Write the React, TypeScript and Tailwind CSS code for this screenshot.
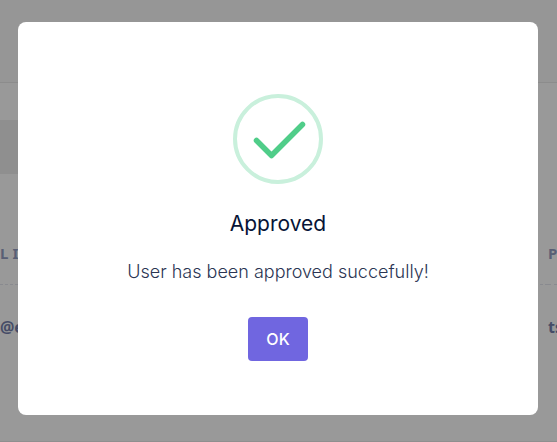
function SuccessIcon() {
  return (
    <svg viewBox="0 0 90 90" className="size-[90px]" fill="none" aria-hidden="true">
      <circle cx="45" cy="45" r="43" stroke="#c9f0dc" strokeWidth="4" />
      <path
        d="M23.5 46.5 38.5 61.5 69.5 30.5"
        stroke="#50cd89"
        strokeWidth="5.5"
        strokeLinecap="round"
        strokeLinejoin="round"
      />
    </svg>
  );
}

function UsersPage() {
  return (
    <div className="flex min-h-screen flex-col border-b border-[#efefef] bg-white font-['Noto_Sans',sans-serif]">
      <header className="h-[83px] border-b border-[#eaeaea] bg-[#fafafa]" />
      <div className="pt-[37px]">
        <div className="h-[54px] w-1/2 bg-[#efefef]" />
      </div>
      <table className="mt-[48px] w-full table-fixed border-collapse text-left">
        <thead>
          <tr className="h-[62px] border-b border-dashed border-[#e4e6ef] text-[15px] font-bold text-[#949fc4]">
            <th className="p-0 tracking-[4px]">LI</th>
            <th className="w-[9px] p-0">P</th>
          </tr>
        </thead>
        <tbody>
          <tr className="h-[86px] text-base font-bold text-[#747fac]">
            <td className="p-0">@e</td>
            <td className="p-0">ts</td>
          </tr>
        </tbody>
      </table>
    </div>
  );
}

export default function App() {
  return (
    <div className="relative h-screen overflow-hidden font-['Inter','Liberation_Sans',sans-serif]">
      <UsersPage />
      <div className="absolute inset-0 flex items-center justify-center bg-black/40 pr-[19px] pb-[5px] pl-[18px]">
        <div
          role="dialog"
          aria-modal="true"
          aria-labelledby="dialog-title"
          aria-describedby="dialog-message"
          className="flex w-full max-w-[520px] flex-col items-center rounded-lg bg-white px-8 pt-[72px] pb-[54px]"
        >
          <SuccessIcon />
          <h2 id="dialog-title" className="mt-6 text-[21px] leading-8 text-[#071437]">
            Approved
          </h2>
          <p id="dialog-message" className="mt-4 text-lg leading-8 font-light text-[#2b3553]">
            User has been approved succefully!
          </p>
          <button
            type="button"
            className="mt-[29px] h-11 w-[60px] rounded bg-[#7066e0] text-base font-medium text-white"
          >
            OK
          </button>
        </div>
      </div>
    </div>
  );
}
